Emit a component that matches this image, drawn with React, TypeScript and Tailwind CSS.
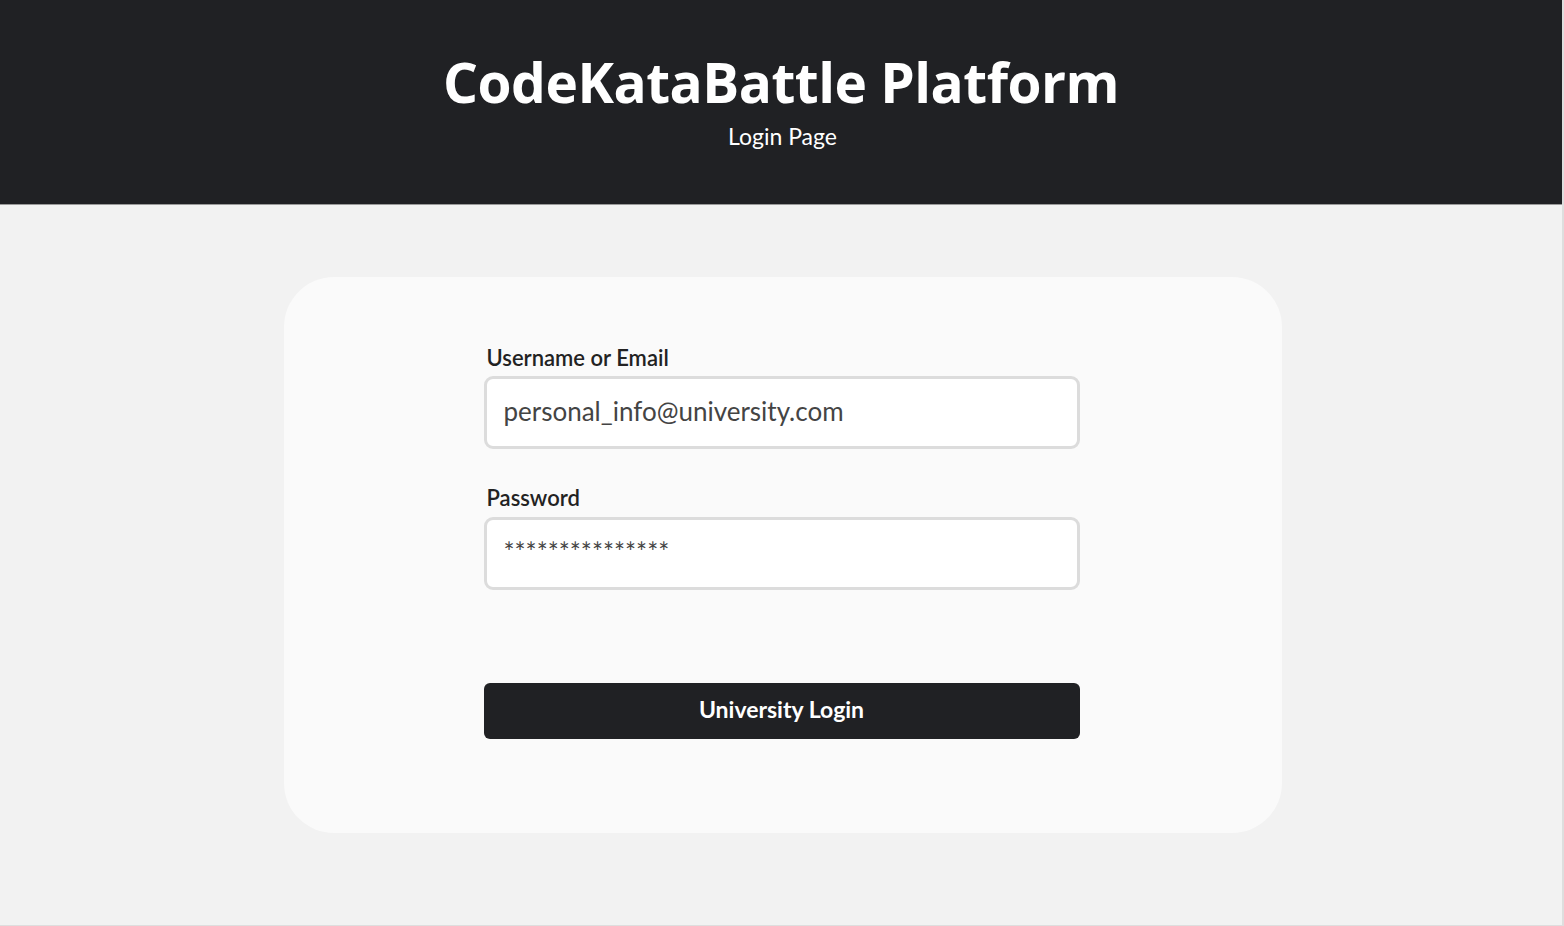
import React from "react";

export default function App() {
  const body = { fontFamily: "Lato, 'Noto Sans', sans-serif" };
  return (
    <div className="min-h-[926px] w-full bg-[#f2f2f2] border-r-2 border-b border-[#dedede] flex flex-col" style={body}>
      <header className="h-[205px] bg-[#202124] border-b border-[#9a9a9a] flex flex-col items-center pt-[50px]">
        <h1
          className="text-white text-[55px] font-bold leading-[64px] tracking-[-0.5px]"
          style={{ fontFamily: "'Open Sans', 'Noto Sans', sans-serif" }}
        >
          CodeKataBattle Platform
        </h1>
        <p className="text-white text-[23px] leading-[28px] mt-[8px] ml-[3px]">Login Page</p>
      </header>
      <main className="flex justify-center pt-[72px] pb-[92px] pl-[4px]">
        <div className="w-[998px] bg-[#fafafa] rounded-[50px] pt-[69px] pb-[94px] flex flex-col items-center">
          <div className="w-[596px] flex flex-col mr-[3px]">
            <label className="text-[22px] leading-[24px] font-semibold text-[#222] ml-[3px] mb-[6px]">
              Username or Email
            </label>
            <div className="h-[73px] bg-white border-[3px] border-[#dcdcdc] rounded-[9px] px-[17px] flex items-center">
              <span className="text-[26px] text-[#444] leading-[32px] -mt-[3px]">personal_info@university.com</span>
            </div>
            <label className="text-[22px] leading-[24px] font-semibold text-[#222] ml-[3px] mt-[37px] mb-[7px]">
              Password
            </label>
            <div className="h-[73px] bg-white border-[3px] border-[#dcdcdc] rounded-[9px] px-[17px] flex items-center">
              <span className="text-[26px] text-[#444] leading-[32px] -mt-[3px]">***************</span>
            </div>
            <button className="mt-[93px] h-[56px] w-full bg-[#202124] rounded-[6px] text-white text-[23px] font-bold">
              <span className="block -mt-[3px]">University Login</span>
            </button>
          </div>
        </div>
      </main>
    </div>
  );
}
